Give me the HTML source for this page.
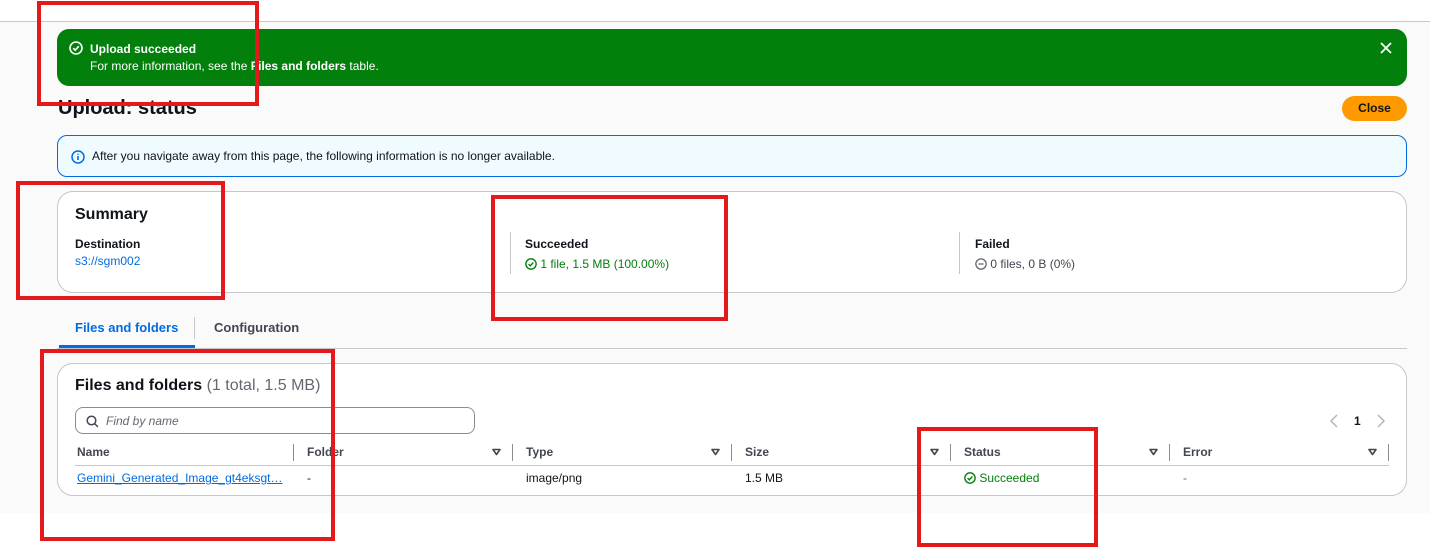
<!DOCTYPE html><html><head><style>
*{box-sizing:border-box;margin:0;padding:0}
body{width:1430px;height:548px;position:relative;background:#fff;font-family:"Liberation Sans",Arial,sans-serif;font-size:12px;color:#0f141a;overflow:hidden}
.a{position:absolute}
.red{position:absolute;border:4px solid #e3191c}
.box{position:absolute;background:#fff;border:1px solid #c6c6cd;border-radius:16px}
.th{position:absolute;top:445px;font-weight:bold;color:#424650;font-size:12px}
.sep{position:absolute;top:444px;width:1px;height:17px;background:#8c8c94}
.arr{position:absolute;top:448px}
</style></head><body>
<div class="a" style="left:0;top:21px;width:1430px;height:492px;background:#fafafa;border-top:1px solid #c6c6cd"></div>
<div class="a" style="left:57px;top:29px;width:1350px;height:57px;background:#037f0c;border-radius:12px;color:#fff">
<svg class="a" style="left:12px;top:12px" width="14" height="14" viewBox="0 0 14 14"><circle cx="7" cy="7" r="6" fill="none" stroke="#fff" stroke-width="1.6"/><path d="M4.2 7.2l2 2 3.6-4" fill="none" stroke="#fff" stroke-width="1.6"/></svg>
<div class="a" style="left:33px;top:13px;font-weight:bold;font-size:12px">Upload succeeded</div>
<div class="a" style="left:33px;top:30px;font-size:12px">For more information, see the <b>Files and folders</b> table.</div>
<svg class="a" style="left:1323px;top:13px" width="12" height="12" viewBox="0 0 12 12"><path d="M1 1l10 10M11 1L1 11" stroke="#fff" stroke-width="1.8"/></svg>
</div>
<div class="a" style="left:58px;top:97px;font-size:20px;font-weight:bold">Upload: status</div>
<div class="a" style="left:1342px;top:96px;width:65px;height:25px;background:#ff9900;border-radius:13px;font-weight:bold;text-align:center;line-height:25px">Close</div>
<div class="a" style="left:57px;top:135px;width:1350px;height:42px;background:#f0fbff;border:1px solid #006ce0;border-radius:10px">
<svg class="a" style="left:13px;top:14px" width="14" height="14" viewBox="0 0 14 14"><circle cx="7" cy="7" r="6" fill="none" stroke="#006ce0" stroke-width="1.5"/><path d="M7 6v4M7 3.8v1" stroke="#006ce0" stroke-width="1.6"/></svg>
<div class="a" style="left:34px;top:13px">After you navigate away from this page, the following information is no longer available.</div>
</div>
<div class="box" style="left:57px;top:191px;width:1350px;height:102px">
<div class="a" style="left:17px;top:14px;font-size:16px;font-weight:bold">Summary</div>
<div class="a" style="left:17px;top:45px;font-weight:bold">Destination</div>
<div class="a" style="left:17px;top:62px;color:#006ce0">s3://sgm002</div>
<div class="a" style="left:452px;top:40px;width:1px;height:42px;background:#c6c6cd"></div>
<div class="a" style="left:467px;top:45px;font-weight:bold">Succeeded</div>
<div class="a" style="left:467px;top:65px;color:#037f0c"><svg width="12" height="12" viewBox="0 0 14 14" style="vertical-align:-2px"><circle cx="7" cy="7" r="6" fill="none" stroke="#037f0c" stroke-width="1.6"/><path d="M4.2 7.2l2 2 3.6-4" fill="none" stroke="#037f0c" stroke-width="1.6"/></svg> 1 file, 1.5 MB (100.00%)</div>
<div class="a" style="left:901px;top:40px;width:1px;height:42px;background:#c6c6cd"></div>
<div class="a" style="left:917px;top:45px;font-weight:bold">Failed</div>
<div class="a" style="left:917px;top:65px;color:#424650"><svg width="12" height="12" viewBox="0 0 14 14" style="vertical-align:-2px"><circle cx="7" cy="7" r="6" fill="none" stroke="#656871" stroke-width="1.5"/><path d="M4 7h6" stroke="#656871" stroke-width="1.5"/></svg> 0 files, 0 B (0%)</div>
</div>
<div class="a" style="left:75px;top:320px;font-weight:bold;color:#006ce0;font-size:13px">Files and folders</div>
<div class="a" style="left:194px;top:317px;width:1px;height:22px;background:#c6c6cd"></div>
<div class="a" style="left:214px;top:320px;font-weight:bold;color:#424650;font-size:13px">Configuration</div>
<div class="a" style="left:59px;top:345px;width:136px;height:3px;background:#006ce0"></div>
<div class="a" style="left:57px;top:348px;width:1350px;height:1px;background:#c6c6cd"></div>
<div class="box" style="left:57px;top:363px;width:1350px;height:133px"></div>
<div class="a" style="left:75px;top:377px;font-size:16px;font-weight:bold">Files and folders <span style="font-weight:normal;color:#656871">(1 total, 1.5 MB)</span></div>
<div class="a" style="left:75px;top:407px;width:400px;height:27px;border:1px solid #8c8c94;border-radius:8px;background:#fff">
<svg class="a" style="left:10px;top:7px" width="13" height="13" viewBox="0 0 13 13"><circle cx="5.5" cy="5.5" r="4.3" fill="none" stroke="#424650" stroke-width="1.5"/><path d="M8.6 8.6l3.3 3.3" stroke="#424650" stroke-width="1.5"/></svg>
<div class="a" style="left:30px;top:6px;font-style:italic;color:#656871">Find by name</div></div>
<svg class="a" style="left:1329px;top:414px" width="10" height="14" viewBox="0 0 10 14"><path d="M8 1L2 7l6 6" fill="none" stroke="#b4b4bb" stroke-width="1.5"/></svg>
<div class="a" style="left:1354px;top:414px;font-weight:bold">1</div>
<svg class="a" style="left:1376px;top:414px" width="10" height="14" viewBox="0 0 10 14"><path d="M2 1l6 6-6 6" fill="none" stroke="#b4b4bb" stroke-width="1.5"/></svg>
<div class="th" style="left:77px">Name</div><div class="sep" style="left:293px"></div>
<div class="th" style="left:307px">Folder</div><svg class="arr" style="left:492px" width="9" height="8" viewBox="0 0 9 8"><path d="M1 1.5h7L4.5 6.5z" fill="none" stroke="#424650" stroke-width="1.6" stroke-linejoin="round"/></svg><div class="sep" style="left:512px"></div>
<div class="th" style="left:526px">Type</div><svg class="arr" style="left:711px" width="9" height="8" viewBox="0 0 9 8"><path d="M1 1.5h7L4.5 6.5z" fill="none" stroke="#424650" stroke-width="1.6" stroke-linejoin="round"/></svg><div class="sep" style="left:731px"></div>
<div class="th" style="left:745px">Size</div><svg class="arr" style="left:930px" width="9" height="8" viewBox="0 0 9 8"><path d="M1 1.5h7L4.5 6.5z" fill="none" stroke="#424650" stroke-width="1.6" stroke-linejoin="round"/></svg><div class="sep" style="left:950px"></div>
<div class="th" style="left:964px">Status</div><svg class="arr" style="left:1149px" width="9" height="8" viewBox="0 0 9 8"><path d="M1 1.5h7L4.5 6.5z" fill="none" stroke="#424650" stroke-width="1.6" stroke-linejoin="round"/></svg><div class="sep" style="left:1169px"></div>
<div class="th" style="left:1183px">Error</div><svg class="arr" style="left:1368px" width="9" height="8" viewBox="0 0 9 8"><path d="M1 1.5h7L4.5 6.5z" fill="none" stroke="#424650" stroke-width="1.6" stroke-linejoin="round"/></svg><div class="sep" style="left:1388px"></div>
<div class="a" style="left:75px;top:465px;width:1314px;height:1px;background:#c6c6cd"></div>
<div class="a" style="left:77px;top:471px;color:#006ce0;text-decoration:underline">Gemini_Generated_Image_gt4eksgt…</div>
<div class="a" style="left:307px;top:471px">-</div>
<div class="a" style="left:526px;top:471px">image/png</div>
<div class="a" style="left:745px;top:471px">1.5 MB</div>
<div class="a" style="left:964px;top:471px;color:#037f0c"><svg width="12" height="12" viewBox="0 0 14 14" style="vertical-align:-2px"><circle cx="7" cy="7" r="6" fill="none" stroke="#037f0c" stroke-width="1.6"/><path d="M4.2 7.2l2 2 3.6-4" fill="none" stroke="#037f0c" stroke-width="1.6"/></svg> Succeeded</div>
<div class="a" style="left:1183px;top:471px;color:#656871">-</div>
<div class="red" style="left:37px;top:1px;width:222px;height:105px"></div>
<div class="red" style="left:16px;top:181px;width:209px;height:119px"></div>
<div class="red" style="left:491px;top:195px;width:237px;height:126px"></div>
<div class="red" style="left:40px;top:349px;width:295px;height:192px"></div>
<div class="red" style="left:917px;top:427px;width:181px;height:120px"></div>
</body></html>
